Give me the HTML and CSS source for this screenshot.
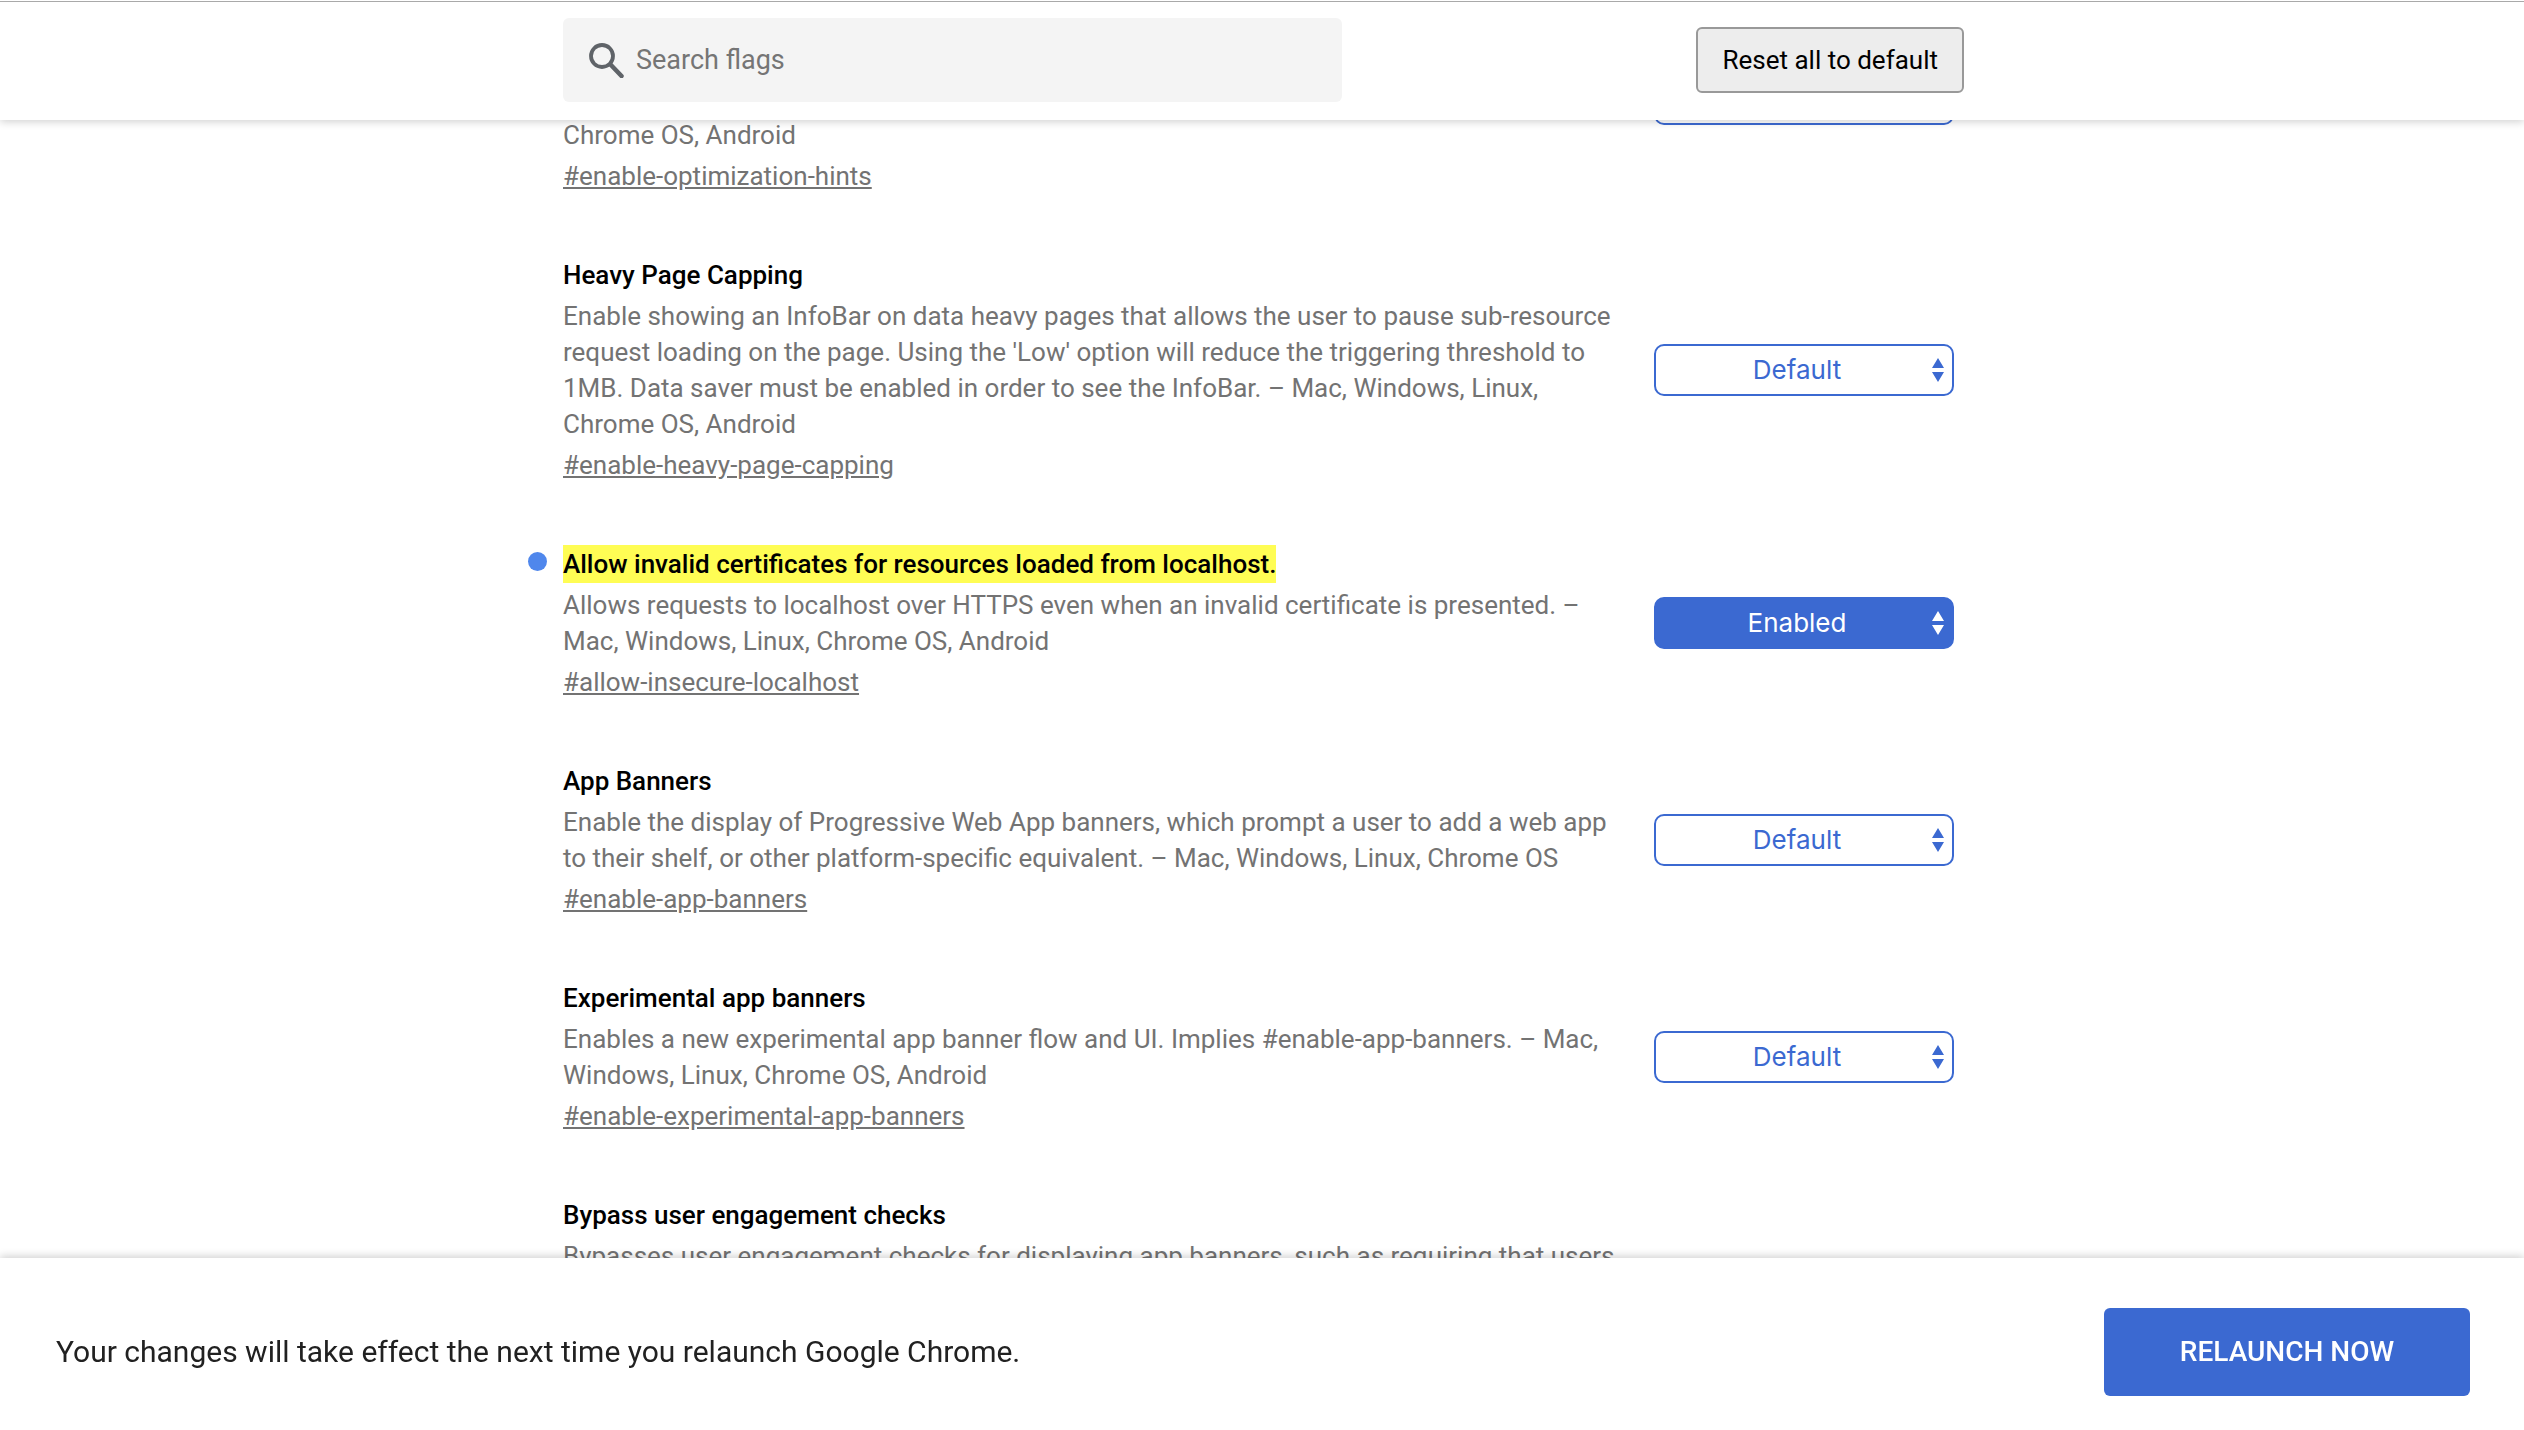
FILE: index.html
```html
<!DOCTYPE html>
<html lang="en">
<head>
<meta charset="utf-8">
<title>Experiments</title>
<link rel="stylesheet" href="styles.css">
</head>
<body>
<header class="topbar">
  <div class="topbar-inner">
    <label class="search">
      <svg class="search-icon" viewBox="0 0 35 35" aria-hidden="true"><g fill="none" stroke="currentColor"><circle cx="13" cy="13" r="11" stroke-width="3.800"/><path d="M21.500 21.500L32.500 33" stroke-width="4.500" stroke-linecap="round"/></g></svg>
      <input class="search-input" type="search" placeholder="Search flags" aria-label="Search flags">
    </label>
    <button class="reset" type="button">Reset all to default</button>
  </div>
</header>

<main class="flags">
  <section class="flag flag-first">
    <div class="flag-text">
      <p class="desc">Chrome OS, Android</p>
      <a class="permalink" href="#enable-optimization-hints">#enable-optimization-hints</a>
    </div>
    <div class="picker">
      <select class="select" aria-label="Optimization hints"><option>Default</option></select>
      <svg class="arrows" viewBox="0 0 12 24" aria-hidden="true"><path d="M6 0L12 10H0zM6 24L0 14H12z"/></svg>
    </div>
  </section>

  <section class="flag" id="enable-heavy-page-capping">
    <div class="flag-text">
      <h2 class="title">Heavy Page Capping</h2>
      <p class="desc">Enable showing an InfoBar on data heavy pages that allows the user to pause sub-resource request loading on the page. Using the 'Low' option will reduce the triggering threshold to 1MB. Data saver must be enabled in order to see the InfoBar. – Mac, Windows, Linux, Chrome OS, Android</p>
      <a class="permalink" href="#enable-heavy-page-capping">#enable-heavy-page-capping</a>
    </div>
    <div class="picker">
      <select class="select" aria-label="Heavy Page Capping"><option>Default</option></select>
      <svg class="arrows" viewBox="0 0 12 24" aria-hidden="true"><path d="M6 0L12 10H0zM6 24L0 14H12z"/></svg>
    </div>
  </section>

  <section class="flag flag-changed" id="allow-insecure-localhost">
    <div class="flag-text">
      <h2 class="title"><mark class="hit">Allow invalid certificates for resources loaded from localhost.</mark></h2>
      <p class="desc">Allows requests to localhost over HTTPS even when an invalid certificate is presented. – Mac, Windows, Linux, Chrome OS, Android</p>
      <a class="permalink" href="#allow-insecure-localhost">#allow-insecure-localhost</a>
    </div>
    <div class="picker">
      <select class="select select-on" aria-label="Allow invalid certificates for resources loaded from localhost."><option>Enabled</option></select>
      <svg class="arrows arrows-on" viewBox="0 0 12 24" aria-hidden="true"><path d="M6 0L12 10H0zM6 24L0 14H12z"/></svg>
    </div>
  </section>

  <section class="flag" id="enable-app-banners">
    <div class="flag-text">
      <h2 class="title">App Banners</h2>
      <p class="desc">Enable the display of Progressive Web App banners, which prompt a user to add a web app to their shelf, or other platform-specific equivalent. – Mac, Windows, Linux, Chrome OS</p>
      <a class="permalink" href="#enable-app-banners">#enable-app-banners</a>
    </div>
    <div class="picker">
      <select class="select" aria-label="App Banners"><option>Default</option></select>
      <svg class="arrows" viewBox="0 0 12 24" aria-hidden="true"><path d="M6 0L12 10H0zM6 24L0 14H12z"/></svg>
    </div>
  </section>

  <section class="flag" id="enable-experimental-app-banners">
    <div class="flag-text">
      <h2 class="title">Experimental app banners</h2>
      <p class="desc">Enables a new experimental app banner flow and UI. Implies #enable-app-banners. – Mac, Windows, Linux, Chrome OS, Android</p>
      <a class="permalink" href="#enable-experimental-app-banners">#enable-experimental-app-banners</a>
    </div>
    <div class="picker">
      <select class="select" aria-label="Experimental app banners"><option>Default</option></select>
      <svg class="arrows" viewBox="0 0 12 24" aria-hidden="true"><path d="M6 0L12 10H0zM6 24L0 14H12z"/></svg>
    </div>
  </section>

  <section class="flag">
    <div class="flag-text">
      <h2 class="title">Bypass user engagement checks</h2>
      <p class="desc">Bypasses user engagement checks for displaying app banners, such as requiring that users</p>
    </div>
  </section>
</main>

<footer class="restart">
  <p class="notice">Your changes will take effect the next time you relaunch Google Chrome.</p>
  <button class="relaunch" type="button">RELAUNCH NOW</button>
</footer>
</body>
</html>
```
FILE: styles.css
```css
:root {
  --blue: #3b69d1;
  --grey: #737373;
}

* {
  box-sizing: border-box;
}

body {
  margin: 0;
  background: #fff;
  color: #000;
  font: 26px/36px Roboto, sans-serif;
}

h2, p {
  margin: 0;
}

/* Fixed search bar */
.topbar {
  position: fixed;
  inset: 0 0 auto;
  z-index: 1;
  padding: 18px 0;
  background: linear-gradient(#fff 1px, #a9a9a9 1px, #a9a9a9 2px, #fff 2px);
  box-shadow: 0 2px 8px rgba(0, 0, 0, 0.18);
}

.topbar-inner {
  display: flex;
  align-items: center;
  justify-content: space-between;
  max-width: 1404px;
  margin: 0 auto;
  padding-left: 3px;
}

.search {
  display: flex;
  align-items: center;
  gap: 12px;
  flex: 0 1 779px;
  height: 84px;
  padding: 0 26px;
  border-radius: 6px;
  background: #f4f4f4;
}

.search-icon {
  flex: none;
  width: 35px;
  height: 35px;
  color: #5f6368;
}

.search-input {
  flex: 1;
  min-width: 0;
  padding: 0;
  border: 0;
  outline: 0;
  background: none;
  font: inherit;
  font-size: 27px;
}

.search-input::placeholder {
  color: #757575;
}

.reset {
  height: 66px;
  padding: 0 24px;
  border: 2px solid #999;
  border-radius: 6px;
  background: #ededed;
  color: #000;
  font: inherit;
}

/* Flag list */
.flags {
  display: flex;
  flex-direction: column;
  gap: 62px;
  max-width: 1404px;
  margin: 0 auto;
  padding: 4px 10px 0 3px;
}

.flag {
  display: flex;
  align-items: center;
  gap: 30px;
}

.flag-first {
  min-height: 190px;
}

.flag-first .flag-text {
  align-self: flex-end;
}

.flag-text {
  position: relative;
  flex: 1;
}

.flag-changed .flag-text::before {
  content: "";
  position: absolute;
  top: 7px;
  left: -35px;
  width: 19px;
  height: 19px;
  border-radius: 50%;
  background: #4f87ec;
}

.title {
  margin-bottom: 4px;
  font-size: 26px;
  font-weight: 500;
  line-height: 38px;
}

.hit {
  display: inline-block;
  background: #fffd54;
  color: inherit;
}

.desc {
  margin-bottom: 5px;
  color: var(--grey);
}

.permalink {
  display: block;
  width: fit-content;
  color: var(--grey);
}

.picker {
  display: grid;
  flex: none;
  align-items: center;
  width: 300px;
}

.select,
.arrows {
  grid-area: 1 / 1;
}

.select {
  appearance: none;
  width: 100%;
  height: 52px;
  padding: 0 14px 0 0;
  border: 2px solid var(--blue);
  border-radius: 10px;
  background: #fff;
  color: var(--blue);
  font: 26px/36px Inter, sans-serif;
  text-align: center;
  text-align-last: center;
}

.select-on {
  background: var(--blue);
  color: #fff;
}

.arrows {
  justify-self: end;
  width: 12px;
  height: 24px;
  margin-right: 10px;
  fill: var(--blue);
  pointer-events: none;
}

.arrows-on {
  fill: #fff;
}

/* Relaunch bar */
.restart {
  position: fixed;
  inset: auto 0 0;
  z-index: 1;
  display: flex;
  align-items: center;
  justify-content: space-between;
  padding: 50px 54px 34px 56px;
  background: #fff;
  box-shadow: 0 -2px 8px rgba(0, 0, 0, 0.18);
}

.notice {
  color: #212121;
  font-size: 30px;
}

.relaunch {
  width: 366px;
  height: 88px;
  border: 0;
  border-radius: 6px;
  background: var(--blue);
  color: #fff;
  font: 500 28px/36px Roboto, sans-serif;
}
```
